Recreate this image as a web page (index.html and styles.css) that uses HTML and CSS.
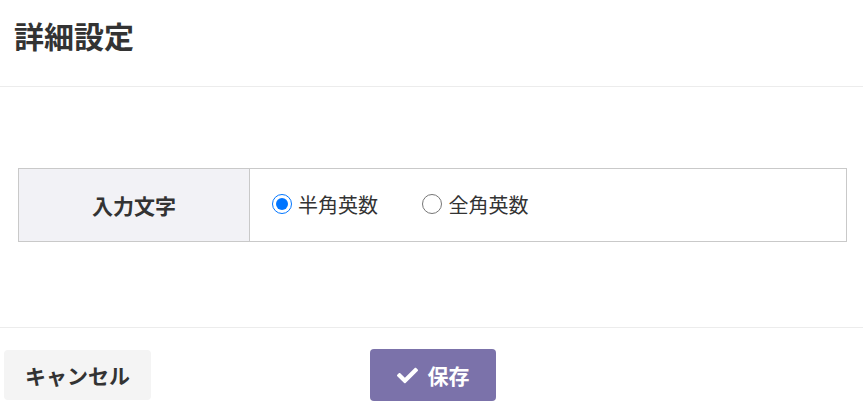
FILE: index.html
```html
<!DOCTYPE html>
<html lang="ja">
<head>
    <meta charset="UTF-8">
    <title>詳細設定</title>
    <link rel="stylesheet" href="styles.css">
</head>
<body>
    <div class="modal">
        <div class="modal-header">
            <h1 class="modal-title">詳細設定</h1>
        </div>

        <div class="modal-body">
            <table class="setting-table">
                <tr>
                    <th>入力文字</th>
                    <td>
                        <label class="radio-item">
                            <input type="radio" name="inputType" value="half" checked>
                            <span>半角英数</span>
                        </label>
                        <label class="radio-item">
                            <input type="radio" name="inputType" value="full">
                            <span>全角英数</span>
                        </label>
                    </td>
                </tr>
            </table>
        </div>

        <div class="modal-footer">
            <button class="btn btn-cancel">キャンセル</button>
            <button class="btn btn-save">
                <svg class="icon-check" viewBox="0 0 512 512" aria-hidden="true">
                    <path fill="currentColor" d="M173.898 439.404l-166.4-166.4c-9.997-9.997-9.997-26.206 0-36.204l36.203-36.204c9.997-9.998 26.207-9.998 36.204 0L192 312.69 432.095 72.596c9.997-9.997 26.207-9.997 36.204 0l36.203 36.204c9.997 9.997 9.997 26.206 0 36.204l-294.4 294.401c-9.998 9.997-26.207 9.997-36.204-.001z"/>
                </svg>
                <span>保存</span>
            </button>
        </div>
    </div>
</body>
</html>
```

FILE: styles.css
```css
body {
    margin: 0;
    padding: 0;
    background-color: #ffffff;
    font-family: "Noto Sans CJK JP", "Noto Sans", sans-serif;
    color: #333333;
}

.modal {
    width: 863px;
}

.modal-header {
    box-sizing: border-box;
    height: 87px;
    padding: 14px 14px 0;
    border-bottom: 1px solid #ececec;
}

.modal-title {
    margin: 0;
    font-size: 30px;
    line-height: 42px;
    font-weight: bold;
    color: #333333;
}

.modal-body {
    padding: 81px 16px 85px 18px;
    border-bottom: 1px solid #ececec;
}

.setting-table {
    width: 829px;
    border-collapse: collapse;
    border: 1px solid #c9c9c9;
}

.setting-table th {
    width: 230px;
    height: 72px;
    padding: 0;
    background-color: #f2f2f6;
    border-right: 1px solid #c9c9c9;
    font-size: 21px;
    font-weight: bold;
    color: #333333;
    text-align: center;
}

.setting-table td {
    padding: 0 0 0 22px;
    font-size: 20px;
}

.radio-item {
    display: inline-flex;
    align-items: center;
    gap: 6px;
    margin-right: 40px;
    cursor: pointer;
}

.radio-item input {
    width: 20px;
    height: 20px;
    margin: 0;
    accent-color: #0075ff;
}

.modal-footer {
    display: flex;
    align-items: center;
    gap: 219px;
    padding: 21px 4px;
}

.btn {
    display: inline-flex;
    align-items: center;
    justify-content: center;
    border: none;
    border-radius: 4px;
    font-family: "Noto Sans CJK JP", "Noto Sans", sans-serif;
    font-size: 21px;
    font-weight: bold;
    cursor: pointer;
}

.btn-cancel {
    width: 147px;
    height: 50px;
    background-color: #f4f4f4;
    color: #333333;
}

.btn-save {
    width: 126px;
    height: 52px;
    gap: 10px;
    background-color: #7b72aa;
    color: #ffffff;
}

.icon-check {
    width: 21px;
    height: 21px;
}

.btn:hover {
    opacity: 0.9;
}
```
